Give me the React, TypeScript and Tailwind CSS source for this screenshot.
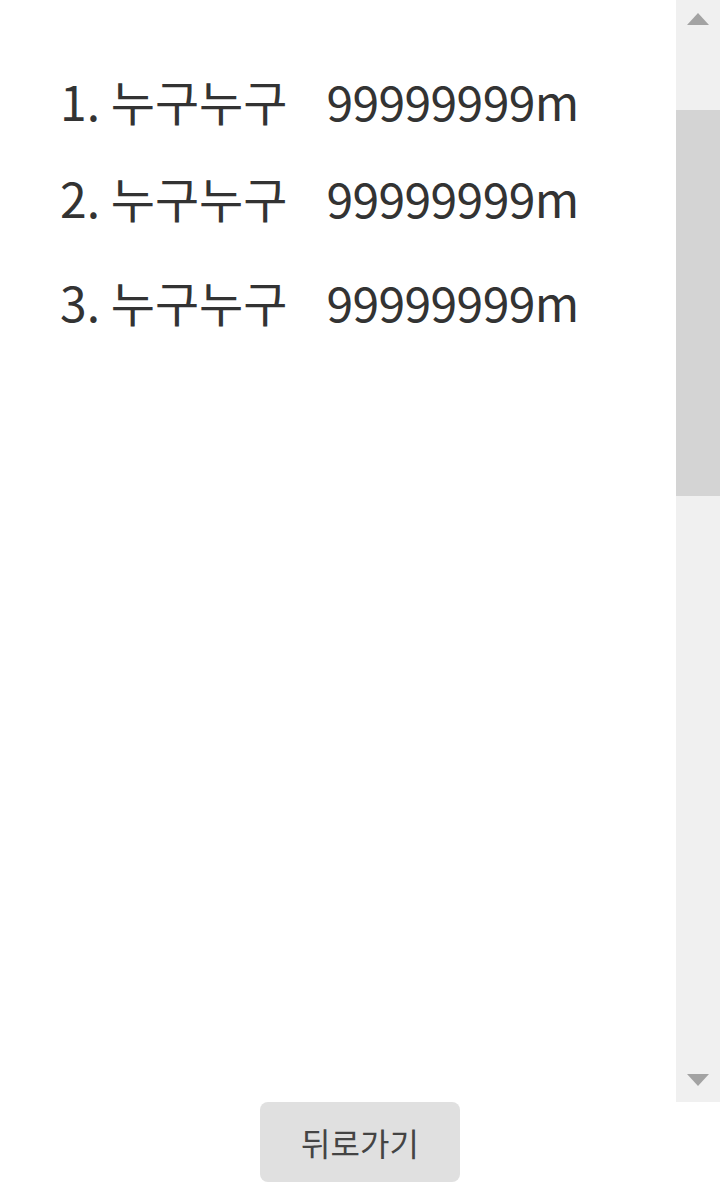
import React from "react";

export default function App() {
  return (
    <div
      className="w-[720px] h-[1200px] bg-white flex flex-col"
      style={{ fontFamily: '"Noto Sans CJK KR", "Noto Sans", sans-serif' }}
    >
      <div className="h-[1102px] flex">
        <div className="flex-1 pl-[60px] pt-[71px] text-[#333333]">
          <div className="flex text-[48px] leading-[58px] h-[58px]">
            <span>1. 누구누구</span>
            <span className="ml-[39px] tracking-[-0.6px]">99999999m</span>
          </div>
          <div className="flex text-[48px] leading-[58px] h-[58px] mt-[39px]">
            <span>2. 누구누구</span>
            <span className="ml-[39px] tracking-[-0.6px]">99999999m</span>
          </div>
          <div className="flex text-[48px] leading-[58px] h-[58px] mt-[46px]">
            <span>3. 누구누구</span>
            <span className="ml-[39px] tracking-[-0.6px]">99999999m</span>
          </div>
        </div>
        <div className="w-[44px] bg-[#f0f0f0] flex flex-col">
          <div className="h-[38px] flex items-center justify-center">
            <svg width="22" height="12" viewBox="0 0 22 12">
              <path d="M11 0 L22 12 L0 12 Z" fill="#a3a3a3" />
            </svg>
          </div>
          <div className="h-[72px]" />
          <div className="h-[386px] bg-[#d4d4d4]" />
          <div className="flex-1" />
          <div className="h-[44px] flex items-center justify-center">
            <svg width="22" height="12" viewBox="0 0 22 12">
              <path d="M0 0 L22 0 L11 12 Z" fill="#a3a3a3" />
            </svg>
          </div>
        </div>
      </div>
      <div className="flex justify-center">
        <button className="w-[200px] h-[80px] rounded-[8px] bg-[#e0e0e0] text-[32px] text-[#444444]">
          뒤로가기
        </button>
      </div>
    </div>
  );
}
